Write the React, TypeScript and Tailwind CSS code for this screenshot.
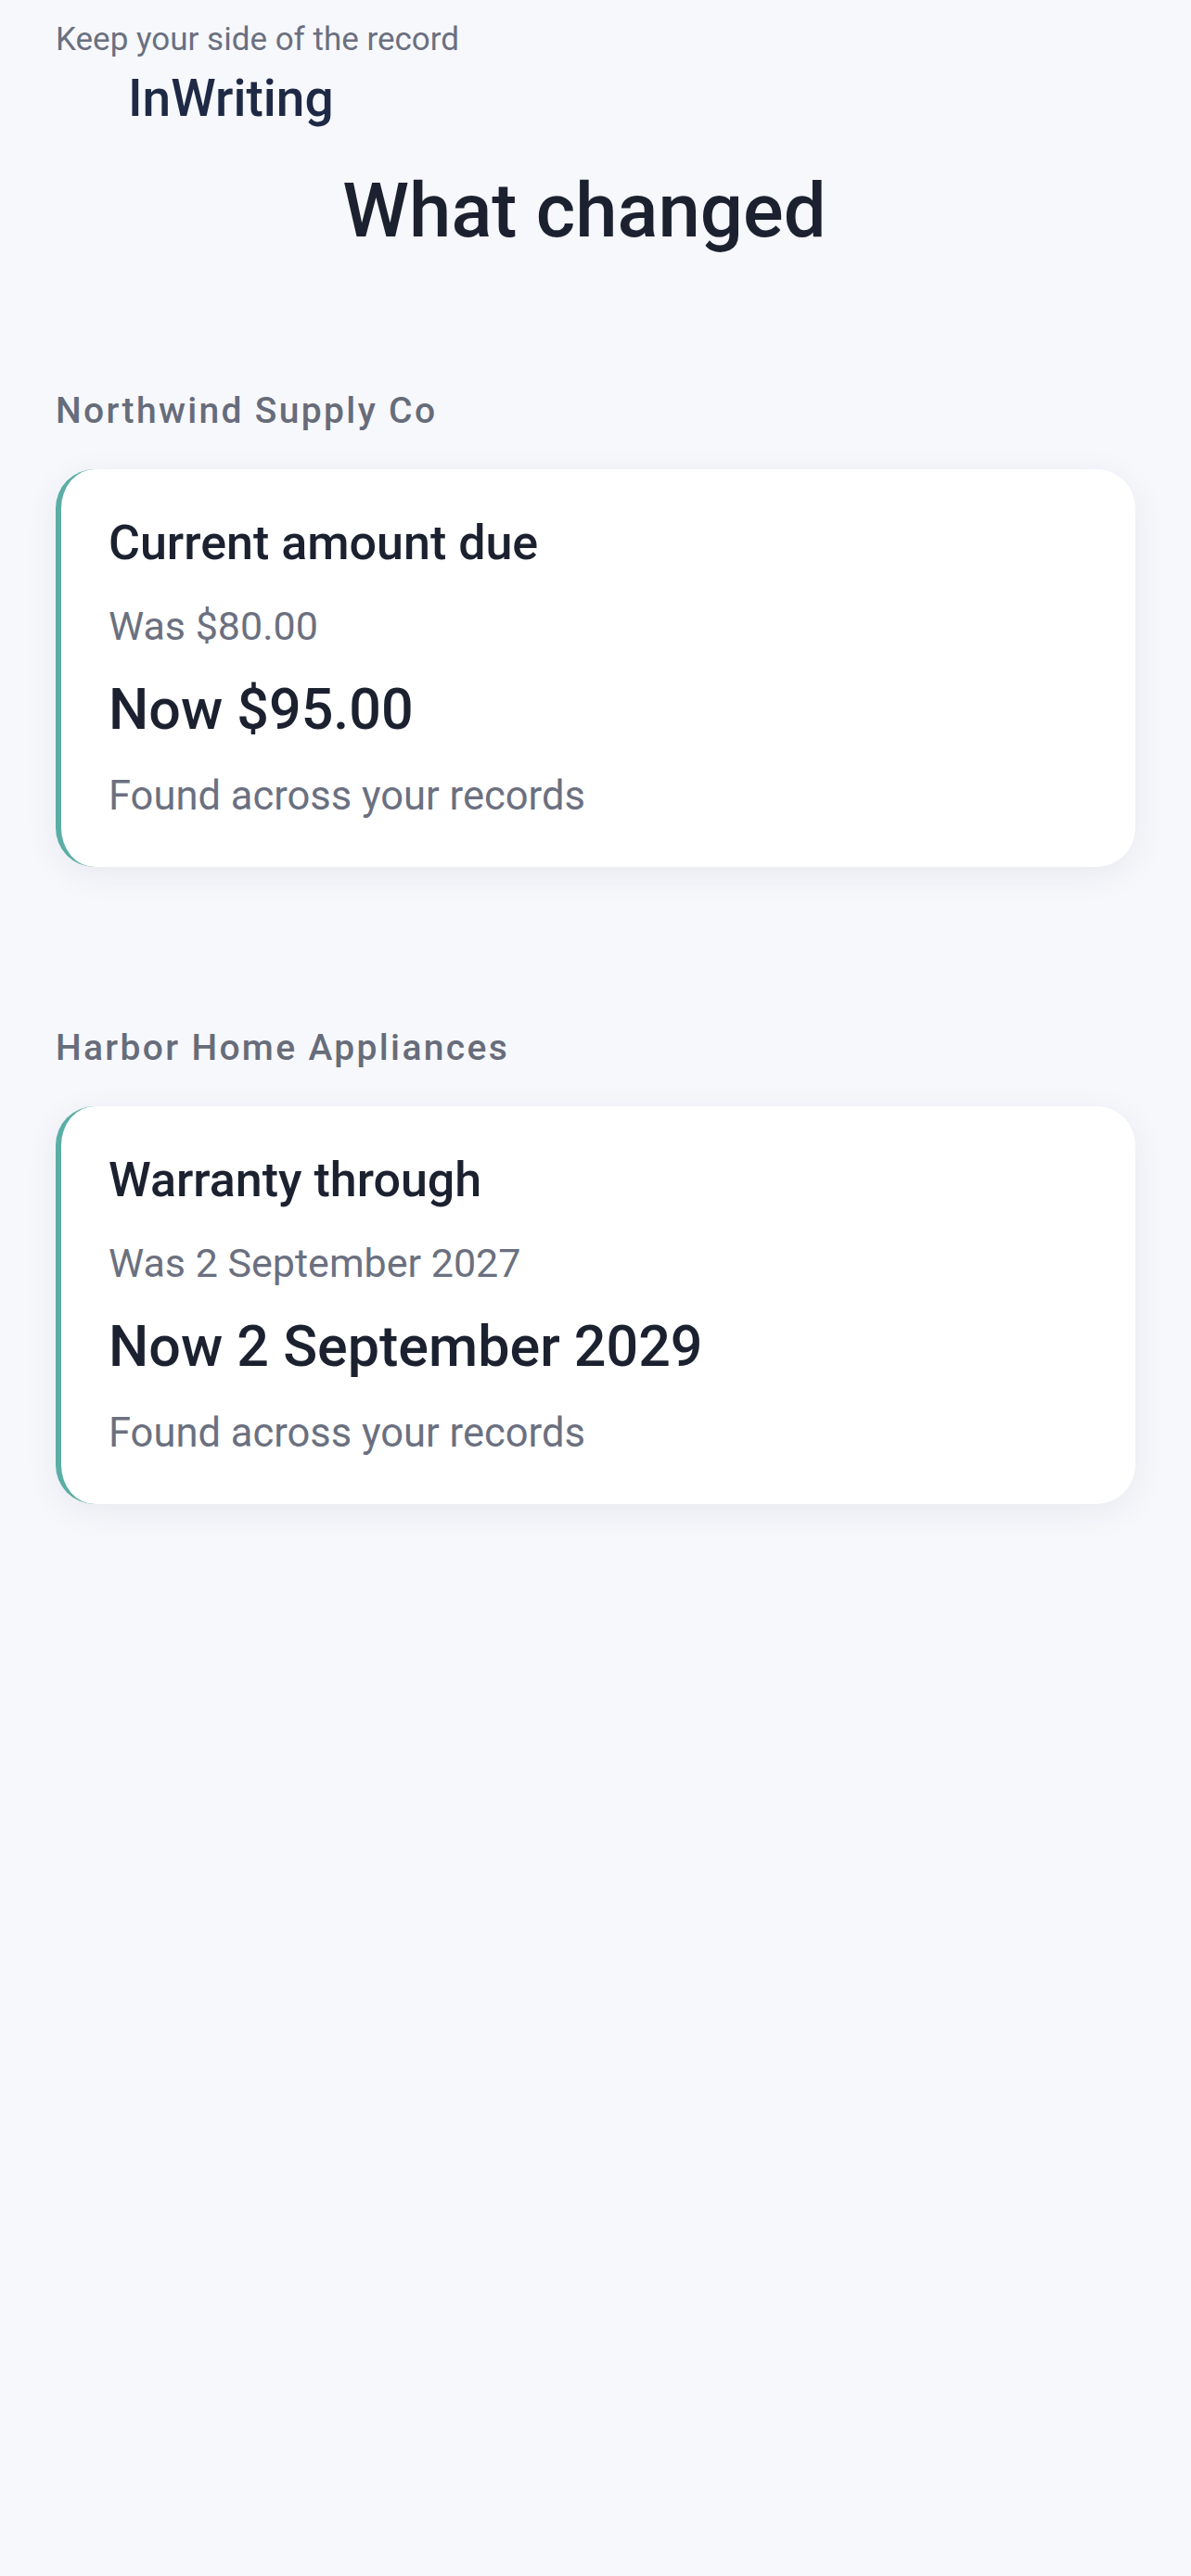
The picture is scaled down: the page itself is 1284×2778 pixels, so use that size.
const changes = [
  {
    source: "Northwind Supply Co",
    field: "Current amount due",
    was: "Was $80.00",
    now: "Now $95.00",
    note: "Found across your records",
  },
  {
    source: "Harbor Home Appliances",
    field: "Warranty through",
    was: "Was 2 September 2027",
    now: "Now 2 September 2029",
    note: "Found across your records",
  },
];

function ChangeCard({ item }: { item: (typeof changes)[number] }) {
  return (
    <div className="rounded-[42px] border-l-[6px] border-[#5aaea5] bg-white pl-[51px] pr-12 pt-12 pb-12 shadow-[0_8px_36px_rgba(30,41,70,0.07)]">
      <h3 className="text-[52px] leading-[64px] font-medium text-[#1c2130]">{item.field}</h3>
      <p className="mt-[30px] text-[43px] leading-[54px] text-[#6b7080]">{item.was}</p>
      <p className="mt-[27px] text-[61px] leading-[72px] font-medium text-[#1c2130]">{item.now}</p>
      <p className="mt-[30px] text-[43.5px] leading-[56px] text-[#6b7080]">{item.note}</p>
    </div>
  );
}

export default function App() {
  return (
    <div className="min-h-screen bg-[#f7f8fc] px-[60px] pt-[23px] font-['Roboto',sans-serif]">
      <header>
        <p className="text-[35px] leading-[40px] text-[#6b7080]">Keep your side of the record</p>
        <div className="mt-[11px] pl-[78px] text-[55px] leading-[64px] font-medium text-[#1e2945]">InWriting</div>
        <h1 className="mt-[41px] pr-6 text-center text-[81.5px] leading-[96px] font-medium text-[#1c2130]">
          What changed
        </h1>
      </header>

      <div className="mt-[144px] flex flex-col gap-[171px]">
        {changes.map((item) => (
          <section key={item.source}>
            <h2 className="text-[39px] leading-[48px] font-medium tracking-[0.06em] text-[#676c7a]">{item.source}</h2>
            <div className="mt-[39px]">
              <ChangeCard item={item} />
            </div>
          </section>
        ))}
      </div>
    </div>
  );
}
